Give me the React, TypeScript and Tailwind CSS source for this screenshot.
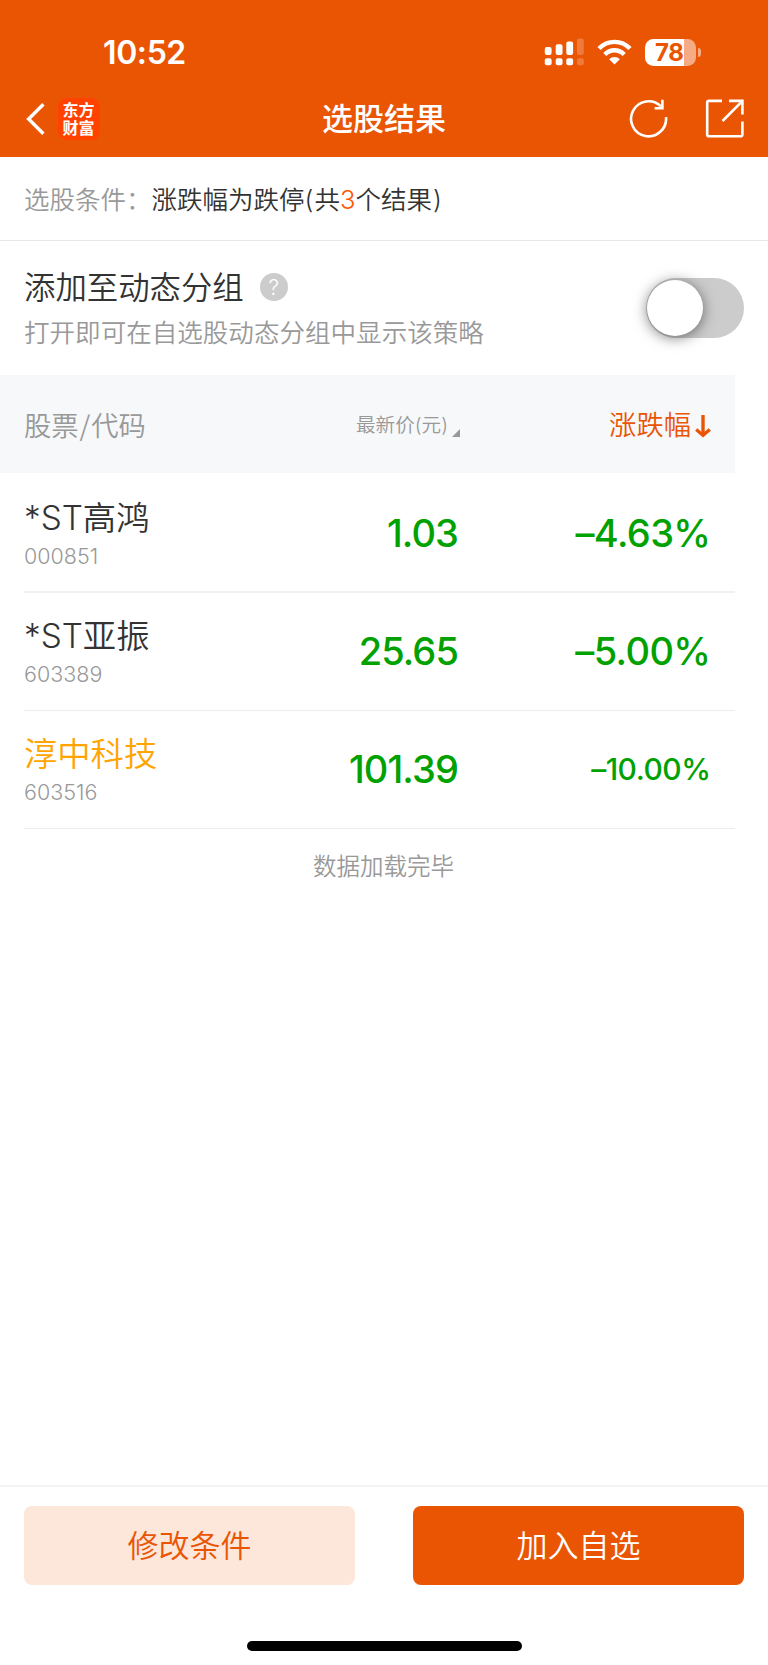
import React from "react";

type Stock = {
  name: string;
  code: string;
  price: string;
  change: string;
  highlight?: boolean;
  compact?: boolean;
};

const stocks: Stock[] = [
  { name: "*ST高鸿", code: "000851", price: "1.03", change: "–4.63%" },
  { name: "*ST亚振", code: "603389", price: "25.65", change: "–5.00%" },
  { name: "淳中科技", code: "603516", price: "101.39", change: "–10.00%", highlight: true, compact: true },
];

function SignalIcon() {
  return (
    <svg className="h-[28px] w-[40px]" viewBox="0 0 40 28" fill="#fff">
      <rect x="0.8" y="9" width="6.8" height="8" rx="2" />
      <rect x="11.7" y="6.2" width="6.8" height="10.8" rx="2" />
      <rect x="22.3" y="3.4" width="6.8" height="13.6" rx="2" />
      <rect x="33" y="0.4" width="6.8" height="16.6" rx="2" opacity="0.22" />
      <rect x="0.8" y="20.2" width="6.8" height="7" rx="2" />
      <rect x="11.7" y="20.2" width="6.8" height="7" rx="2" />
      <rect x="22.3" y="20.2" width="6.8" height="7" rx="2" />
      <rect x="33" y="20.2" width="6.8" height="7" rx="2" opacity="0.22" />
    </svg>
  );
}

function WifiIcon() {
  return (
    <svg className="ml-[13px] h-[26px] w-[35px]" viewBox="0 0 35 26" fill="none" stroke="#fff" strokeWidth="4.4">
      <path d="M2 9.6C10.4 0.6 24.6 0.6 33 9.6" />
      <path d="M7.8 15.5C13.2 9.9 21.8 9.9 27.2 15.5" />
      <path d="M17.5 25.4 L12.2 20.2 C15.2 17.2 19.8 17.2 22.8 20.2 Z" fill="#fff" stroke="none" />
    </svg>
  );
}

function Battery() {
  return (
    <div className="ml-[13px] flex items-center gap-[2px]">
      <div className="flex h-[27px] w-[51px] items-center overflow-hidden rounded-[8.5px] bg-[linear-gradient(90deg,#fff_0_39px,#f5ab84_39px)] pl-[10px]">
        <span className="text-[24px] leading-[27px] font-bold tracking-[-0.4px] text-[#ea5504]">78</span>
      </div>
      <div className="h-[9px] w-[3px] rounded-r-full bg-[#f5ab84]" />
    </div>
  );
}

function Header() {
  return (
    <header className="h-[157px] w-full shrink-0 bg-[#ea5504] text-white">
      <div className="flex h-[79px] items-end justify-between pr-[67px] pl-[103px]">
        <span className="mb-[6px] text-[32px] leading-[40px] font-semibold tracking-[-0.4px]">10:52</span>
        <div className="mb-[13px] flex items-center">
          <SignalIcon />
          <WifiIcon />
          <Battery />
        </div>
      </div>
      <div className="grid h-[78px] grid-cols-3 items-center pt-px">
        <div className="flex items-center pl-[25.5px]">
          <svg className="h-[32px] w-[19px]" viewBox="0 0 19 32" fill="none" stroke="#fff" strokeWidth="3.4">
            <path d="M17.4 1.2 L2.6 16 L17.4 30.8" />
          </svg>
          <div className="ml-[13px] flex h-[42px] w-[42px] flex-col items-center justify-center rounded-[9px] bg-[#ff4200] text-[16px] leading-[18px] font-bold">
            <span>东方</span>
            <span>财富</span>
          </div>
        </div>
        <h1 className="pt-px text-center text-[31px] leading-[40px] font-medium">选股结果</h1>
        <div className="flex items-center justify-end gap-[37px] pr-[24px]">
          <svg className="h-[40px] w-[40px]" viewBox="0 0 40 40" fill="none" stroke="#fff" strokeWidth="2.6">
            <path d="M38 18.2 A17.5 17.5 0 1 1 32.9 7.4" />
            <path d="M34.4 0.8 V9.2 H26.6" />
          </svg>
          <svg className="h-[40px] w-[39px]" viewBox="0 0 39 40" fill="none" stroke="#fff" strokeWidth="2.6">
            <path d="M17 1.9 H4 Q2.2 1.9 2.2 3.6 V35.4 Q2.2 37.2 4 37.2 H35.6 Q37.4 37.2 37.4 35.4 V22.5" />
            <path d="M24 1.9 H37.4 V15.5" />
            <path d="M37 2.3 L17.5 22" />
          </svg>
        </div>
      </div>
    </header>
  );
}

function DynamicGroup() {
  return (
    <section className="flex h-[134px] items-center justify-between px-6">
      <div className="pt-px">
        <div className="flex items-center">
          <span className="text-[31.4px] leading-[44px] text-[#333]">添加至动态分组</span>
          <span className="mb-[2px] ml-[16px] flex h-7 w-7 items-center justify-center rounded-full bg-[#ccc] text-[21px] leading-none text-white">?</span>
        </div>
        <p className="mt-[5px] text-[25.55px] leading-[36px] text-[#999]">打开即可在自选股动态分组中显示该策略</p>
      </div>
      <div className="flex h-[60px] w-[98px] items-center rounded-full bg-[#ccc] pl-[1px]">
        <div className="h-[56px] w-[56px] rounded-full bg-white shadow-[0_2px_14px_rgba(0,0,0,0.5)]" />
      </div>
    </section>
  );
}

function TableHeader() {
  return (
    <div className="mb-[2px] flex h-[98px] w-[735px] items-center bg-[#f7f8fa] pt-[4px] pl-6 text-[27.3px] text-[#999]">
      <span className="w-[250px]">
        股票<span className="px-px font-['Noto_Sans_CJK_SC',sans-serif]">/</span>代码
      </span>
      <div className="flex w-[186px] items-center justify-end">
        <span className="text-[19.6px]">最新价(元)</span>
        <svg className="mt-[14px] ml-[4px] h-[8px] w-[8px]" viewBox="0 0 8 8" fill="#999">
          <path d="M8 0 V8 H0 Z" />
        </svg>
      </div>
      <div className="flex flex-1 items-center justify-end pr-[24px] text-[#ea5504]">
        <span>涨跌幅</span>
        <svg className="ml-[4px] h-[24px] w-[16px]" viewBox="0 0 16 24" fill="none" stroke="#ea5504" strokeWidth="3.4">
          <path d="M8 1 V21" />
          <path d="M1.2 15.5 L8 21.2 L14.8 15.5" />
        </svg>
      </div>
    </div>
  );
}

function StockRow({ stock }: { stock: Stock }) {
  return (
    <div className="ml-6 flex h-[118px] w-[711px] items-center border-b border-[#ececec] first-of-type:border-b-2 first-of-type:border-[#f1f1f1]">
      <div className="w-[250px]">
        <div className={stock.highlight ? "text-[33.3px] leading-[44px] text-[#ffa400]" : "text-[33.3px] leading-[44px] text-[#333]"}>
          {stock.name}
        </div>
        <div className="mt-[2px] mb-px text-[21.5px] leading-[28px] text-[#999]">{stock.code}</div>
      </div>
      <div className="w-[184px] text-right text-[38px] font-medium tracking-[-0.9px] text-[#00a100]">{stock.price}</div>
      <div
        className={
          stock.compact
            ? "flex-1 pr-[24.5px] text-right text-[30px] font-medium tracking-[-0.5px] text-[#00a100] [font-feature-settings:'calt'_0]"
            : "flex-1 pr-[24.5px] text-right text-[38px] font-medium tracking-[-0.6px] text-[#00a100] [font-feature-settings:'calt'_0]"
        }
      >
        {stock.change}
      </div>
    </div>
  );
}

export default function App() {
  return (
    <div className="flex h-[1665px] w-[768px] flex-col overflow-hidden bg-white font-['Inter','Noto_Sans_CJK_SC',sans-serif] font-[350]">
      <Header />
      <section className="flex h-[84px] items-center border-b border-[#e8e8e8] px-6 pt-[3px] text-[25.5px] text-[#333]">
        <span className="text-[#999]">选股条件：</span>
        <span>
          涨跌幅为跌停<span className="pr-px">(</span>共<span className="text-[#ff5500]">3</span>个结果<span className="pl-px">)</span>
        </span>
      </section>
      <DynamicGroup />
      <main className="flex-1">
        <TableHeader />
        <div>
          {stocks.map((stock) => (
            <StockRow key={stock.code} stock={stock} />
          ))}
        </div>
        <p className="mt-[20px] pr-px text-center text-[23.5px] leading-[36px] text-[#999]">数据加载完毕</p>
      </main>
      <footer className="h-[180px] shrink-0 border-t-2 border-[#f3f3f3] pt-[19px]">
        <div className="flex justify-between px-6 text-[31px]">
          <button className="h-[79px] w-[331px] rounded-[8px] bg-[#fde6da] pt-[2px] text-[#ea5504]">修改条件</button>
          <button className="h-[79px] w-[331px] rounded-[8px] bg-[#ea5504] pt-[2px] text-white">加入自选</button>
        </div>
        <div className="mx-auto mt-[56px] h-[10px] w-[275px] rounded-full bg-black" />
      </footer>
    </div>
  );
}
